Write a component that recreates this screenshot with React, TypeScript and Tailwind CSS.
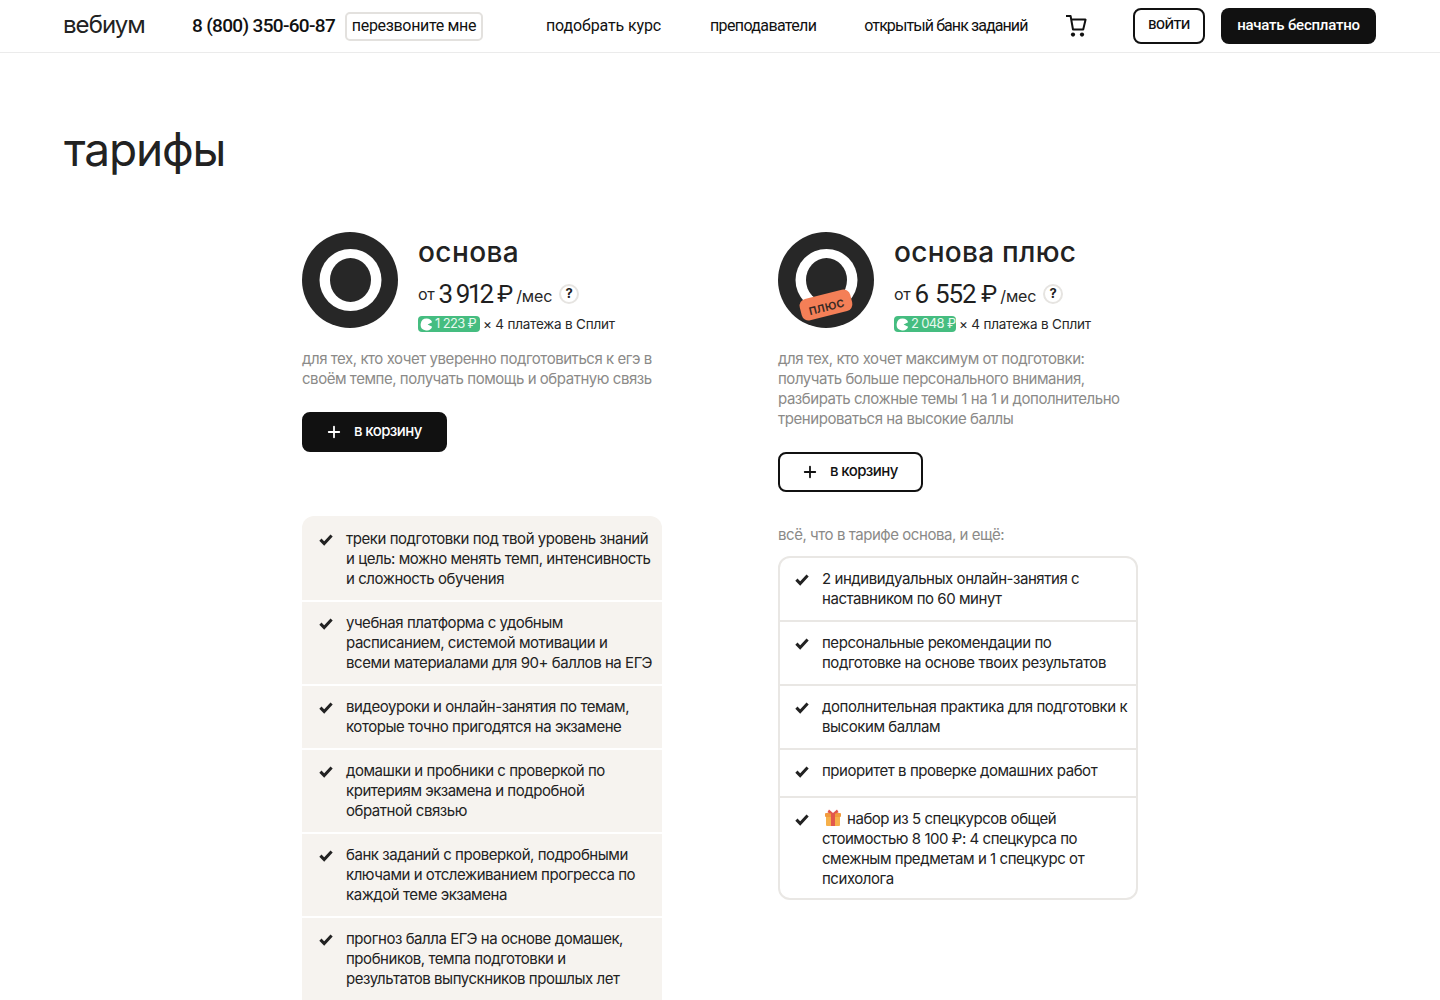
import { Plus } from "lucide-react";

const baseFeatures = [
  ["треки подготовки под твой уровень знаний", "и цель: можно менять темп, интенсивность", "и сложность обучения"],
  ["учебная платформа с удобным", "расписанием, системой мотивации и", "всеми материалами для 90+ баллов на ЕГЭ"],
  ["видеоуроки и онлайн-занятия по темам,", "которые точно пригодятся на экзамене"],
  ["домашки и пробники с проверкой по", "критериям экзамена и подробной", "обратной связью"],
  ["банк заданий с проверкой, подробными", "ключами и отслеживанием прогресса по", "каждой теме экзамена"],
  ["прогноз балла ЕГЭ на основе домашек,", "пробников, темпа подготовки и", "результатов выпускников прошлых лет"],
];

const plusFeatures = [
  ["2 индивидуальных онлайн-занятия с", "наставником по 60 минут"],
  ["персональные рекомендации по", "подготовке на основе твоих результатов"],
  ["дополнительная практика для подготовки к", "высоким баллам"],
];

function Check() {
  return (
    <svg width="14" height="12" viewBox="0 0 14 12" fill="none" className="mt-[5px] shrink-0">
      <path d="M1.4 5.6 5.2 9.6 12.6 1.6" stroke="#222222" strokeWidth="3" />
    </svg>
  );
}

function Cart() {
  return (
    <svg width="21" height="22" viewBox="0 0 21 22" fill="none" className="ml-[39px] shrink-0">
      <path d="M0 1H4.6L7 14.5H17.2L19.6 4.6H5.4" stroke="#111111" strokeWidth="2" strokeLinejoin="round" />
      <circle cx="7" cy="19.6" r="2.1" fill="#111111" />
      <circle cx="16" cy="19.6" r="2.1" fill="#111111" />
    </svg>
  );
}

function Logo({ plus }: { plus?: boolean }) {
  return (
    <div className="relative h-24 w-24 shrink-0">
      <svg width="96" height="96" viewBox="0 0 96 96">
        <circle cx="48" cy="48" r="48" fill="#272727" />
        <ellipse cx="48.5" cy="48" rx="31" ry="31" fill="#ffffff" />
        <ellipse cx="48.5" cy="48" rx="20.5" ry="22" fill="#272727" />
      </svg>
      {plus && (
        <div className="absolute left-[22px] top-[62px] flex h-[22px] w-[52px] -rotate-[14deg] items-center justify-center rounded-[7px] bg-[#f47f57] text-[14px] font-medium text-[#3a2a24]">
          плюс
        </div>
      )}
    </div>
  );
}

function Price({ from, split, tight }: { from: string; split: string; tight?: boolean }) {
  return (
    <>
      <div className="mt-2 flex h-8 items-center">
        <span className="text-[16px] tracking-[-0.02em] text-[#272727]">от</span>
        <span
          className={`ml-[4px] whitespace-nowrap font-['Roboto',sans-serif] text-[26px] text-[#1f1f1f] [word-spacing:2px] ${
            tight ? "tracking-[-0.108em]" : "tracking-[-0.046em]"
          }`}
        >
          {from}
        </span>
        <span className="ml-[6px] font-['Roboto',sans-serif] text-[24px] text-[#1f1f1f]">₽</span>
        <span className="ml-[3px] mt-[3px] text-[16px] tracking-[-0.01em] text-[#272727]">/мес</span>
        <span className="ml-[7px] flex h-5 w-5 items-center justify-center rounded-full border-2 border-[#e6e4e1] text-[13px] font-bold text-[#222222]">
          ?
        </span>
      </div>
      <div className="mt-[6px] flex h-4 items-center whitespace-nowrap text-[13.5px] tracking-[-0.015em] text-[#272727]">
        <span className="flex h-4 w-[62px] items-center gap-[2px] rounded-[4px] bg-[#45bd80] pl-[2px] text-[13px] tracking-[-0.05em] text-[#e9f8ef]">
          <svg width="13" height="13" viewBox="0 0 12 12" className="shrink-0">
            <path d="M6.2 0.5a5.5 5.5 0 1 0 5 7.6L7 6l4.2-2.1A5.5 5.5 0 0 0 6.2 0.5Z" fill="#ffffff" />
          </svg>
          {split} ₽
        </span>
        <span className="ml-[3px]">× 4 платежа в Сплит</span>
      </div>
    </>
  );
}

function CartButton({ filled }: { filled?: boolean }) {
  return (
    <button
      className={`flex h-10 w-[145px] items-center rounded-[8px] border-2 pl-[21px] text-[15px] font-medium tracking-[-0.04em] ${
        filled ? "border-[#111111] bg-[#111111] text-white" : "border-[#111111] bg-white text-[#111111]"
      }`}
    >
      <Plus size={18} strokeWidth={2.4} />
      <span className="ml-[11px] -mt-[2px]">в корзину</span>
    </button>
  );
}

function Lines({ lines }: { lines: string[] }) {
  return (
    <div>
      {lines.map((line) => (
        <div key={line} className="whitespace-nowrap">
          {line}
        </div>
      ))}
    </div>
  );
}

function Gift() {
  return (
    <svg width="16" height="17" viewBox="0 0 16 17" className="ml-[3px] mr-[6px] inline-block align-[-2px]">
      <rect x="1" y="6" width="14" height="11" rx="1" fill="#f6b04a" />
      <rect x="0" y="4" width="16" height="4" rx="1" fill="#f19a3e" />
      <rect x="6" y="4" width="4" height="13" fill="#e2574c" />
      <path d="M8 4 4 0.5 2.4 3.2 5 4.6ZM8 4l4-3.5 1.6 2.7L11 4.6Z" fill="#e2574c" />
    </svg>
  );
}

export default function App() {
  return (
    <div className="h-[1000px] overflow-hidden bg-white font-['Inter','Noto_Sans',sans-serif] text-[#222222]">
      <header className="flex h-[53px] items-center whitespace-nowrap border-b border-[#ebebeb] pl-[63px] pr-[64px] font-['Roboto',sans-serif] text-[#111111]">
        <div className="-mt-[3px] w-[129px] font-['Inter',sans-serif] text-[24px] tracking-[-0.04em] text-[#222222]">вебиум</div>
        <div className="w-[143px] text-[19px] font-medium tracking-[-0.035em]">8 (800) 350-60-87</div>
        <button className="ml-[10px] h-[29px] w-[138px] rounded-[5px] border-2 border-[#e3e1de] text-[16px] tracking-[-0.02em]">
          перезвоните мне
        </button>
        <nav className="ml-[63px] flex gap-12 text-[16px]">
          <span className="tracking-[-0.008em]">подобрать курс</span>
          <span className="ml-[1px] tracking-[-0.04em]">преподаватели</span>
          <span className="tracking-[-0.057em]">открытый банк заданий</span>
        </nav>
        <Cart />
        <div className="ml-auto flex gap-4">
          <button className="h-9 w-[72px] rounded-[8px] border-2 border-[#111111] pb-[2px] text-[13px] font-medium tracking-[-0.03em]">ВОЙТИ</button>
          <button className="h-9 w-[155px] rounded-[8px] bg-[#111111] pb-[2px] text-[15px] font-medium tracking-[-0.015em] text-white">
            начать бесплатно
          </button>
        </div>
      </header>

      <h1 className="pl-[64px] pt-[64px] text-[46px] leading-[64px] tracking-[-0.025em] text-[#222222]">тарифы</h1>

      <main className="mt-[51px] flex justify-center gap-[116px]">
        <section className="w-[360px]">
          <div className="flex h-24 gap-5">
            <Logo />
            <div>
              <h2 className="mt-[2px] text-[28px] font-medium leading-[36px] tracking-[0.015em]">основа</h2>
              <Price from="3 912" split="1 223" tight />
            </div>
          </div>
          <p className="mt-[21px] text-[15px] leading-5 tracking-[-0.03em] text-[#8b8a88]">
            для тех, кто хочет уверенно подготовиться к егэ в своём темпе, получать помощь и обратную связь
          </p>
          <div className="mt-[23px]">
            <CartButton filled />
          </div>
          <ul className="mt-16 flex flex-col gap-[2px] text-[15px] leading-5 tracking-[-0.03em]">
            {baseFeatures.map((lines, i) => (
              <li
                key={lines[0]}
                className={`flex gap-[13px] bg-[#f6f3ef] pb-[11px] pl-[17px] ${i === 0 ? "rounded-t-[12px] pt-[13px]" : "pt-[11px]"}`}
              >
                <Check />
                <Lines lines={lines} />
              </li>
            ))}
          </ul>
        </section>

        <section className="w-[360px]">
          <div className="flex h-24 gap-5">
            <Logo plus />
            <div>
              <h2 className="mt-[2px] text-[28px] font-medium leading-[36px] tracking-[0.01em]">основа плюс</h2>
              <Price from="6 552" split="2 048" />
            </div>
          </div>
          <p className="mt-[21px] text-[15px] leading-5 tracking-[-0.03em] text-[#8b8a88]">
            для тех, кто хочет максимум от подготовки: получать больше персонального внимания, разбирать сложные темы 1 на 1 и дополнительно тренироваться на высокие баллы
          </p>
          <div className="mt-[23px]">
            <CartButton />
          </div>
          <p className="mt-[33px] text-[15px] leading-5 tracking-[-0.03em] text-[#8b8a88]">всё, что в тарифе основа, и ещё:</p>
          <ul className="mt-[11px] rounded-[12px] border-2 border-[#e9e7e4] text-[15px] leading-5 tracking-[-0.03em]">
            {plusFeatures.map((lines, i) => (
              <li key={lines[0]} className={`flex gap-[13px] pb-[11px] pl-[15px] pt-[11px] ${i > 0 ? "border-t-2 border-[#e9e7e4]" : ""}`}>
                <Check />
                <Lines lines={lines} />
              </li>
            ))}
            <li className="flex gap-[13px] border-t-2 border-[#e9e7e4] pb-[15px] pl-[15px] pt-[11px]">
              <Check />
              <Lines lines={["приоритет в проверке домашних работ"]} />
            </li>
            <li className="flex gap-[13px] border-t-2 border-[#e9e7e4] pb-[9px] pl-[15px] pt-[11px]">
              <Check />
              <div className="whitespace-nowrap">
                <div className="h-5">
                  <Gift />
                  набор из 5 спецкурсов общей
                </div>
                <div>стоимостью 8 100 ₽: 4 спецкурса по</div>
                <div>смежным предметам и 1 спецкурс от</div>
                <div>психолога</div>
              </div>
            </li>
          </ul>
        </section>
      </main>
    </div>
  );
}
